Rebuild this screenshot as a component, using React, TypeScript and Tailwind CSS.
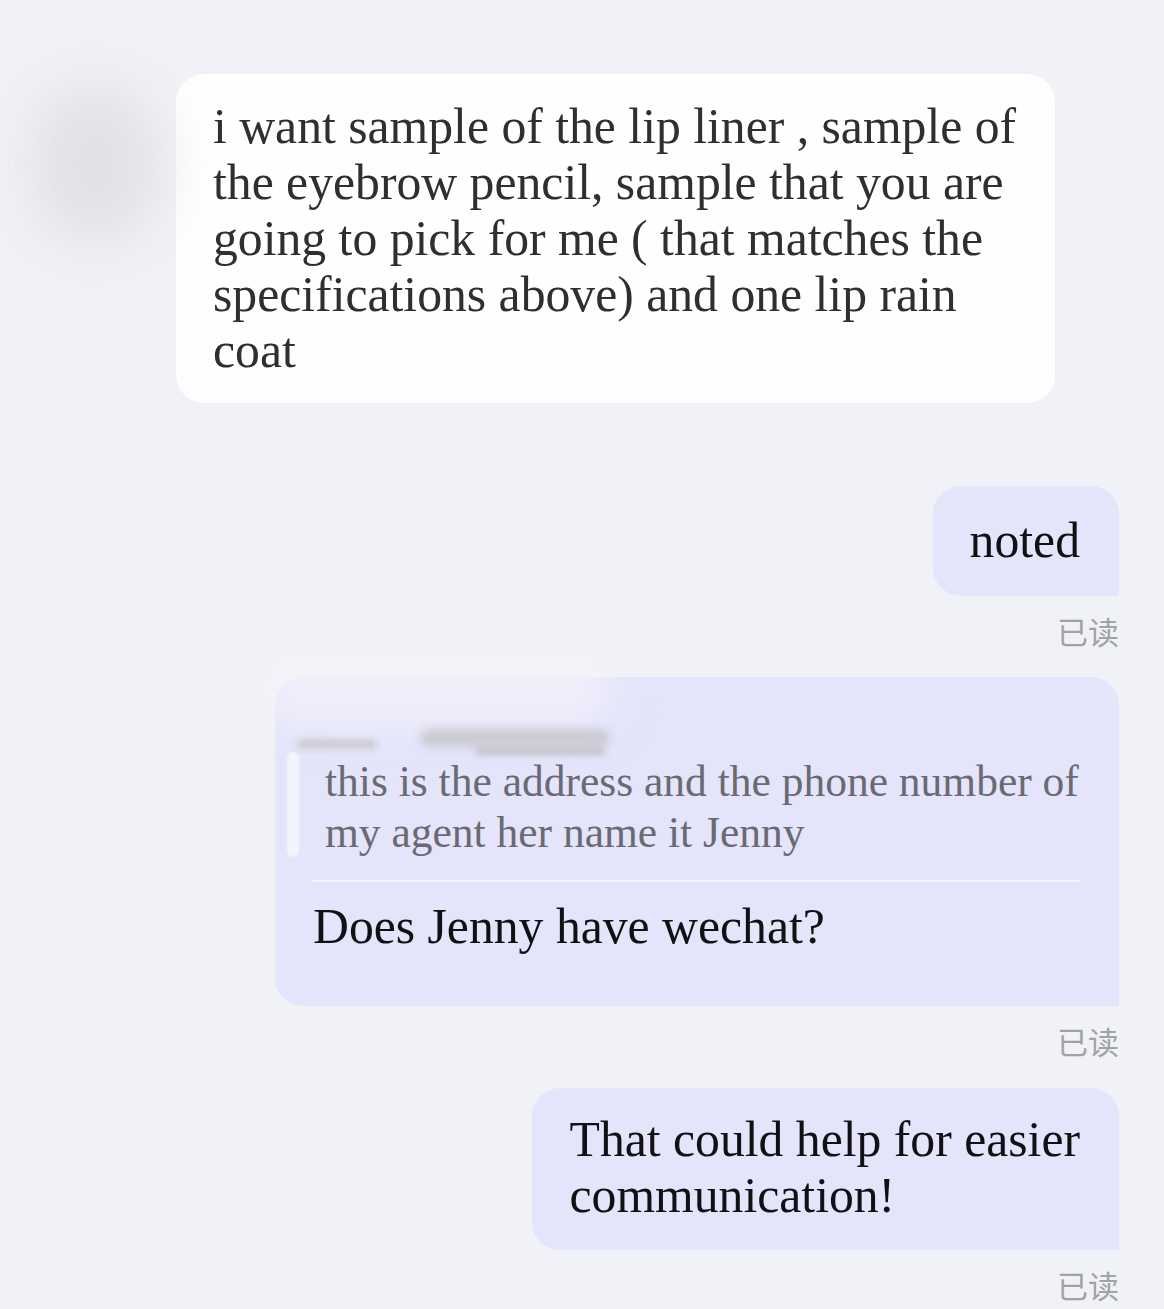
const FIRST = [
  "i want sample of the lip liner , sample of",
  "the eyebrow pencil, sample that you are",
  "going to pick for me ( that matches the",
  "specifications above) and one lip rain",
  "coat",
];

const QUOTE = ["this is the address and the phone number of", "my agent her name it Jenny"];

const LAST = ["That could help for easier", "communication!"];

function Read() {
  return (
    <p className="mt-[17px] font-['Noto_Sans_CJK_SC',sans-serif] text-[31px] leading-[36px] text-[#a2a2a6]">
      已读
    </p>
  );
}

export default function App() {
  return (
    <div className="min-h-[1309px] w-[1164px] overflow-hidden bg-[#f1f2f7] pt-[74px] font-['Liberation_Serif','Noto_Sans_CJK_SC',serif]">
      {/* incoming */}
      <div className="flex items-start pl-[30px]">
        <div className="mt-[10px] h-[160px] w-[130px] rounded-full bg-[#e2e2e6] blur-[26px]" />
        <div className="ml-[16px] rounded-[28px] bg-[#fefefe] pb-[24px] pl-[37px] pr-[39px] pt-[25px] text-[49.7px] leading-[56px] text-[#2f2f31]">
          {FIRST.map((l) => (
            <span key={l} className="block whitespace-nowrap">
              {l}
            </span>
          ))}
        </div>
      </div>

      {/* outgoing */}
      <div className="mt-[83px] flex flex-col items-end pr-[45px]">
        <div className="rounded-[28px] rounded-br-none bg-[#e4e4fb] py-[27px] pl-[37px] pr-[39px] text-[49.7px] leading-[56px] text-[#111114]">
          noted
        </div>
        <Read />

        <div className="relative mt-[28px] w-[844px] rounded-[28px] rounded-br-none bg-[#e4e4fb] pb-[51px] pl-[12px] pr-[39px] pt-[42px]">
          {/* redaction haze over the top */}
          <div className="absolute -left-[20px] -top-[30px] h-[80px] w-[360px] rounded-full bg-[#f3f3fb]/70 blur-[20px]" />
          <div className="absolute left-[22px] top-[62px] h-[10px] w-[80px] rounded-full bg-[#cdcdd4] blur-[3px]" />
          <div className="absolute left-[145px] top-[52px] h-[18px] w-[190px] rounded-full bg-[#cacad2] blur-[5px]" />
          <div className="absolute left-[200px] top-[70px] h-[8px] w-[130px] rounded-full bg-[#c2c2ca] blur-[3px]" />
          <div className="h-[37px]" />
          <div className="relative flex items-start">
            <div className="mt-[-4px] h-[105px] w-[12px] rounded-full bg-[#f4f4fc] blur-[1px]" />
            <div className="ml-[26px] text-[43.5px] leading-[51px] text-[#6a6a72]">
              {QUOTE.map((l) => (
                <span key={l} className="block whitespace-nowrap">
                  {l}
                </span>
              ))}
            </div>
          </div>
          <div className="ml-[25px] mt-[22px] h-[1.5px] bg-[#f3f3fd]" />
          <p className="ml-[26px] mt-[17px] whitespace-nowrap text-[49.7px] leading-[56px] text-[#111114]">
            Does Jenny have wechat?
          </p>
        </div>
        <Read />

        <div className="mt-[29px] rounded-[28px] rounded-br-none bg-[#e4e4fb] pb-[26px] pl-[38px] pr-[39px] pt-[24px] text-[49.7px] leading-[56px] text-[#111114]">
          {LAST.map((l) => (
            <span key={l} className="block whitespace-nowrap">
              {l}
            </span>
          ))}
        </div>
        <Read />
      </div>
    </div>
  );
}
